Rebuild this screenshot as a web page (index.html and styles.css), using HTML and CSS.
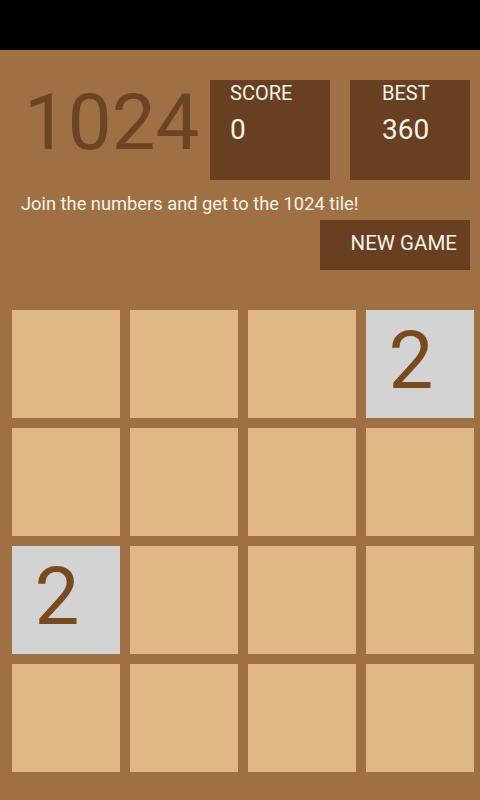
FILE: index.html
```html
<!DOCTYPE html>
<html lang="en">
<head>
    <meta charset="UTF-8">
    <meta name="viewport" content="width=device-width, initial-scale=1.0">
    <title>1024</title>
    <link rel="stylesheet" href="styles.css">
</head>
<body>
    <div class="status-bar"></div>

    <div class="header">
        <h1 class="title">1024</h1>
        <div class="score-box score">
            <div class="score-label">SCORE</div>
            <div class="score-value">0</div>
        </div>
        <div class="score-box best">
            <div class="score-label">BEST</div>
            <div class="score-value">360</div>
        </div>
    </div>

    <p class="intro">Join the numbers and get to the 1024 tile!</p>

    <div class="actions">
        <button class="new-game">NEW GAME</button>
    </div>

    <!-- 4x4 board -->
    <div class="board">
        <div class="tile"></div>
        <div class="tile"></div>
        <div class="tile"></div>
        <div class="tile tile-2">2</div>

        <div class="tile"></div>
        <div class="tile"></div>
        <div class="tile"></div>
        <div class="tile"></div>

        <div class="tile tile-2">2</div>
        <div class="tile"></div>
        <div class="tile"></div>
        <div class="tile"></div>

        <div class="tile"></div>
        <div class="tile"></div>
        <div class="tile"></div>
        <div class="tile"></div>
    </div>
</body>
</html>
```

FILE: styles.css
```css
body {
    margin: 0;
    background-color: #9f7043;
    font-family: Roboto, "Liberation Sans", sans-serif;
    width: 480px;
    height: 800px;
    overflow: hidden;
}
.status-bar {
    height: 50px;
    background-color: #000;
}
.header {
    display: flex;
    align-items: flex-start;
    padding: 30px 10px 0 24px;
}
.title {
    margin: 0;
    width: 186px;
    font-size: 78px;
    line-height: 86px;
    font-weight: normal;
    color: #6c4423;
}
.score-box {
    width: 120px;
    height: 100px;
    box-sizing: border-box;
    background-color: #683f20;
    color: #f7f2ea;
    padding-top: 1px;
}
.score {
    padding-left: 20px;
}
.best {
    margin-left: 20px;
    padding-left: 32px;
}
.score-label {
    font-size: 20px;
    line-height: 24px;
}
.score-value {
    margin-top: 8px;
    font-size: 28px;
    line-height: 34px;
}
.intro {
    margin: 13px 0 0 21px;
    font-size: 18.3px;
    line-height: 22px;
    color: #f7f2ea;
}
.actions {
    display: flex;
    justify-content: flex-end;
    padding-right: 10px;
    margin-top: 5px;
}
.new-game {
    width: 150px;
    height: 50px;
    border: none;
    border-radius: 0;
    background-color: #683f20;
    color: #f7f2ea;
    font-family: Roboto, "Liberation Sans", sans-serif;
    font-size: 20.5px;
    text-align: right;
    padding: 0 13px 4px 0;
}
.board {
    display: grid;
    grid-template-columns: repeat(4, 108px);
    grid-auto-rows: 108px;
    gap: 10px;
    padding-left: 12px;
    margin-top: 40px;
}
.tile {
    background-color: #e0b887;
}
.tile-2 {
    background-color: #d3d3d3;
    color: #7a4a1f;
    font-size: 80px;
    line-height: 102px;
    text-align: center;
    padding-right: 18px;
}
```
